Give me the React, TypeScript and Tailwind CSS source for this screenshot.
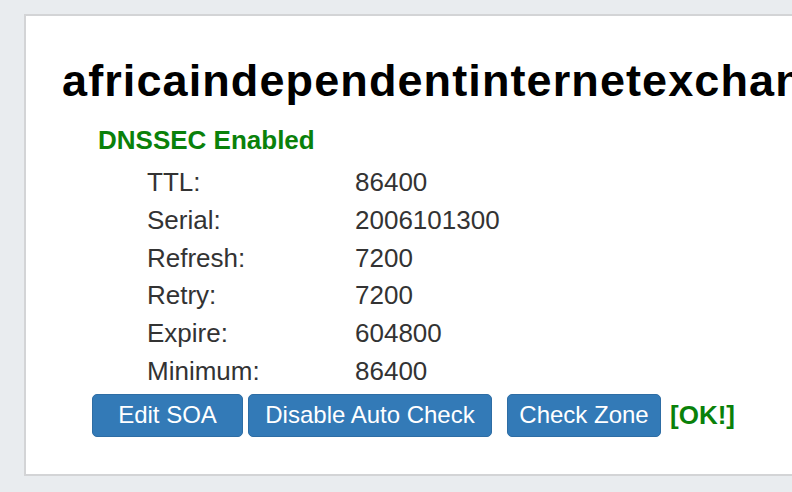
const rows: [string, string][] = [
  ["TTL:", "86400"],
  ["Serial:", "2006101300"],
  ["Refresh:", "7200"],
  ["Retry:", "7200"],
  ["Expire:", "604800"],
  ["Minimum:", "86400"],
]

const btn =
  "flex h-[43px] items-center justify-center rounded-[5px] border border-[#2e6da4] bg-[#337ab7] text-[24px] text-white"

export default function App() {
  return (
    <div className="h-[492px] w-[792px] overflow-hidden bg-[#e9ecef] pl-[24px] pt-[14px] font-['Liberation_Sans',Arial,sans-serif]">
      <div className="h-[462px] w-[1000px] border-2 border-[#d3d4d6] bg-white pl-[36px] pt-[42px]">
        <h1 className="whitespace-nowrap text-[45px] font-bold leading-[46px] tracking-[1.1px] text-black">
          africaindependentinternetexchange.net
        </h1>

        <div className="ml-[36px] mt-[17px] text-[26px] font-bold leading-[38px] text-[#0a810a]">DNSSEC Enabled</div>

        <div className="ml-[85px] mt-[5px] text-[26px] leading-[37.8px] text-[#333333]">
          {rows.map(([label, value]) => (
            <div key={label} className="flex">
              <div className="w-[208px]">{label}</div>
              <div>{value}</div>
            </div>
          ))}
        </div>

        <div className="ml-[30px] mt-[3px] flex items-center">
          <button className={`${btn} w-[151px]`}>Edit SOA</button>
          <button className={`${btn} ml-[5px] w-[244px]`}>Disable Auto Check</button>
          <button className={`${btn} ml-[15px] w-[154px]`}>Check Zone</button>
          <span className="ml-[9px] text-[26px] font-bold text-[#0a810a]">[OK!]</span>
        </div>
      </div>
    </div>
  )
}
